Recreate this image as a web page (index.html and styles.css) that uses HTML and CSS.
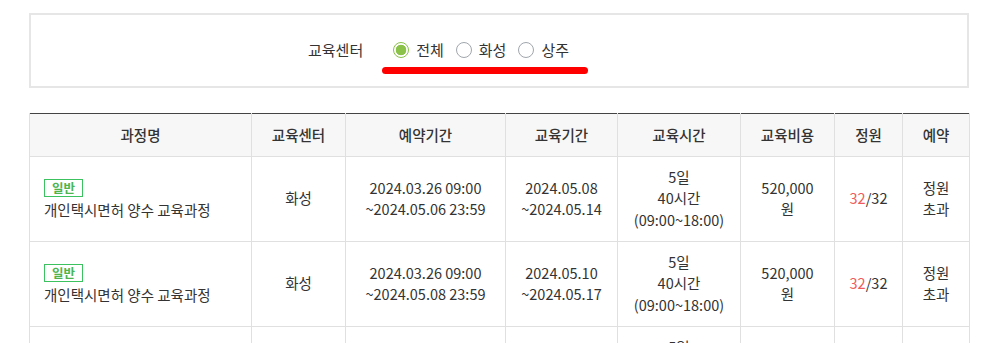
FILE: index.html
```html
<!DOCTYPE html>
<html>
<head>
<meta charset="utf-8">
<link rel="stylesheet" href="styles.css">
</head>
<body>
<div class="wrap">
  <div class="filter">
    <span class="filter-label">교육센터</span>
    <label class="radio"><span class="dot checked"></span>전체</label>
    <label class="radio"><span class="dot"></span>화성</label>
    <label class="radio"><span class="dot"></span>상주</label>
    <span class="mark"></span>
  </div>
  <table class="list">
    <colgroup>
      <col class="c1"><col class="c2"><col class="c3"><col class="c4"><col class="c5"><col class="c6"><col class="c7"><col class="c8">
    </colgroup>
    <thead>
      <tr><th>과정명</th><th>교육센터</th><th>예약기간</th><th>교육기간</th><th>교육시간</th><th>교육비용</th><th>정원</th><th>예약</th></tr>
    </thead>
    <tbody>
      <tr>
        <td class="name"><span class="badge">일반</span><br>개인택시면허 양수 교육과정</td>
        <td>화성</td>
        <td>2024.03.26 09:00<br>~2024.05.06 23:59</td>
        <td>2024.05.08<br>~2024.05.14</td>
        <td>5일<br>40시간<br>(09:00~18:00)</td>
        <td>520,000<br>원</td>
        <td><span class="red">32</span>/32</td>
        <td>정원<br>초과</td>
      </tr>
      <tr>
        <td class="name"><span class="badge">일반</span><br>개인택시면허 양수 교육과정</td>
        <td>화성</td>
        <td>2024.03.26 09:00<br>~2024.05.08 23:59</td>
        <td>2024.05.10<br>~2024.05.17</td>
        <td>5일<br>40시간<br>(09:00~18:00)</td>
        <td>520,000<br>원</td>
        <td><span class="red">32</span>/32</td>
        <td>정원<br>초과</td>
      </tr>
      <tr>
        <td class="name"><span class="badge">일반</span><br>개인택시면허 양수 교육과정</td>
        <td>화성</td>
        <td>2024.03.26 09:00<br>~2024.05.13 23:59</td>
        <td>2024.05.15<br>~2024.05.22</td>
        <td>5일<br>40시간<br>(09:00~18:00)</td>
        <td>520,000<br>원</td>
        <td><span class="red">32</span>/32</td>
        <td>정원<br>초과</td>
      </tr>
    </tbody>
  </table>
</div>
</body>
</html>
```
FILE: styles.css
```css
* { box-sizing: border-box; }
html, body { margin: 0; padding: 0; background: #fff; }
body {
  font-family: "Noto Sans CJK KR", "Noto Sans", sans-serif;
  color: #333;
  font-size: 15px;
}
.wrap {
  width: 940px;
  margin-left: 29px;
  padding-top: 13px;
}
.filter {
  position: relative;
  height: 75px;
  border: 2px solid #e6e6e6;
  display: flex;
  align-items: center;
  padding-left: 277px;
  padding-bottom: 2px;
  font-size: 15px;
}
.filter-label { margin-right: 30px; }
.radio {
  display: flex;
  align-items: center;
  margin-right: 12px;
  font-size: 15px;
}
.dot {
  width: 16px;
  height: 16px;
  border-radius: 50%;
  border: 1px solid #a0a6ad;
  background: #fff;
  margin-right: 7px;
  display: inline-block;
}
.dot.checked {
  border: 1.5px solid #8bc34a;
  background: radial-gradient(circle, #8bc34a 0, #8bc34a 5px, #fff 5.6px);
}
.mark {
  position: absolute;
  left: 351px;
  top: 52px;
  width: 206px;
  height: 7px;
  border-radius: 4px;
  background: #ff0000;
}
.list {
  margin-top: 25px;
  width: 940px;
  border-collapse: collapse;
  table-layout: fixed;
  border-top: 1px solid #444;
}
.c1 { width: 222px; }
.c2 { width: 94px; }
.c3 { width: 160px; }
.c4 { width: 112px; }
.c5 { width: 123px; }
.c6 { width: 94px; }
.c7 { width: 68px; }
.c8 { width: 67px; }
.list th {
  background: #f7f7f7;
  height: 43px;
  font-weight: 500;
  font-size: 14.5px;
  border: 1px solid #e0e0e0;
  border-top: none;
  padding: 0 0 2px;
}
.list td {
  height: 85px;
  text-align: center;
  vertical-align: middle;
  border: 1px solid #e0e0e0;
  line-height: 21.5px;
  padding: 0 4px 2px;
  font-size: 14.5px;
}
.list td.name {
  text-align: left;
  padding-left: 14px;
}
.badge {
  display: inline-block;
  border: 1px solid #3cc35f;
  color: #4cb54e;
  font-size: 12.5px;
  font-weight: 700;
  line-height: 16px;
  padding: 0 7px;
  margin-bottom: 2px;
}
.red { color: #f05a5a; }
```
